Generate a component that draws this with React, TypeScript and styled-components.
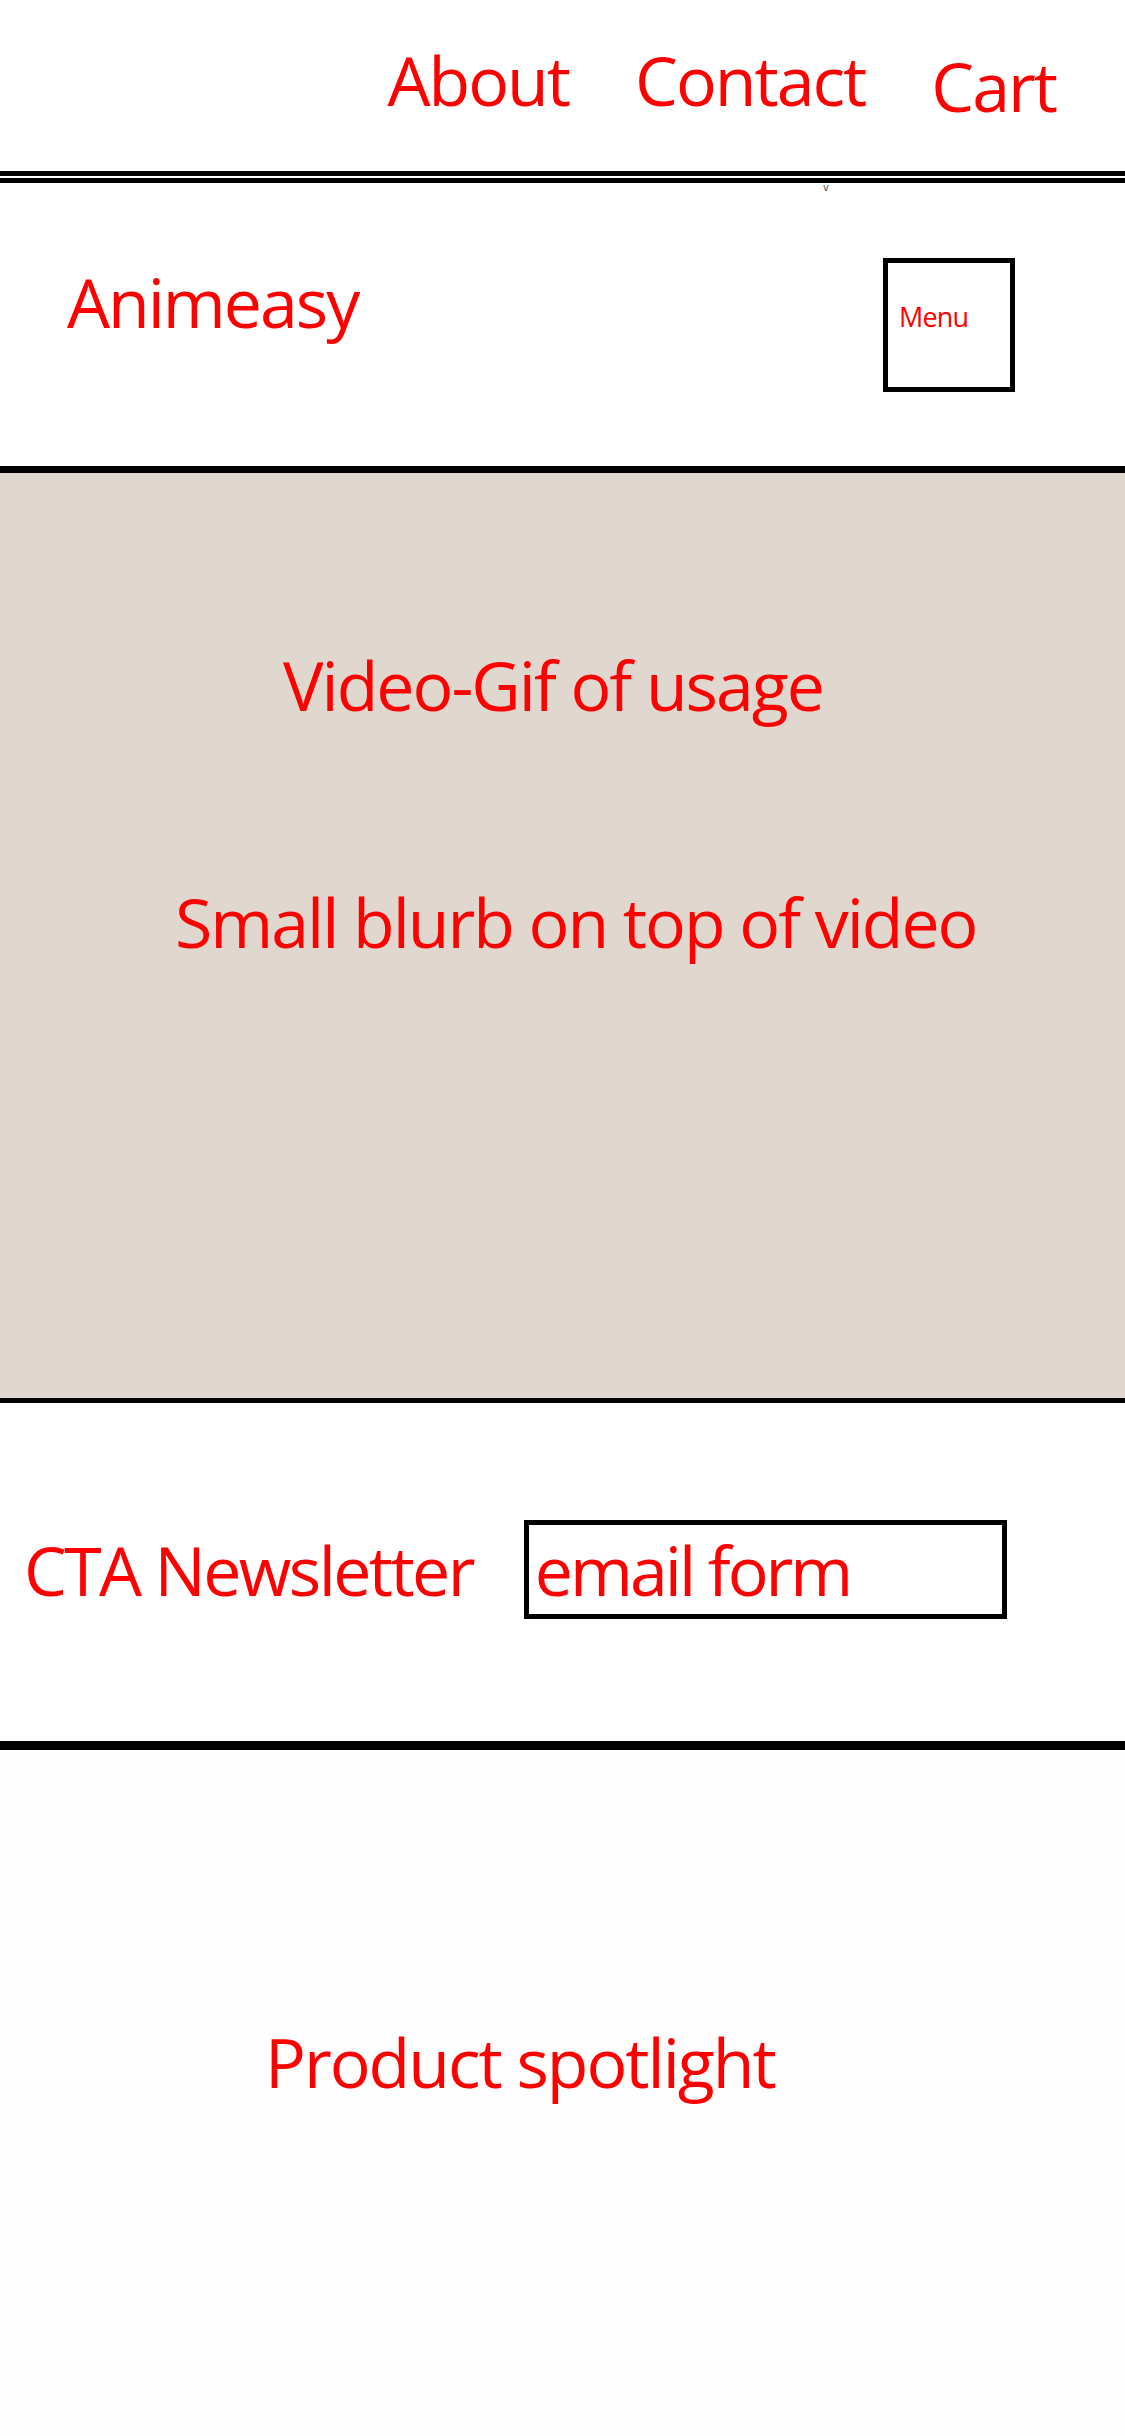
import * as React from "react";
import styled, { createGlobalStyle } from "styled-components";

const RED = "#ff0000";
const INK = "#000000";

const GlobalStyle = createGlobalStyle`
  html, body {
    margin: 0;
    padding: 0;
    background: #ffffff;
  }
  body {
    font-family: "Open Sans", "Liberation Sans", sans-serif;
  }
  * {
    box-sizing: border-box;
  }
`;

const SPage = styled.div`
  width: 1125px;
  min-height: 2436px;
  display: flex;
  flex-direction: column;
  background: #fefefe;
`;

const SLabel = styled.span<{ size?: number; track?: number }>`
  display: block;
  font-size: ${p => p.size || 68}px;
  line-height: 1;
  color: ${RED};
  letter-spacing: ${p =>
    p.track !== undefined ? p.track : ((p.size || 68) * -0.03).toFixed(1)}px;
  white-space: nowrap;
`;

/* top strip with the links */
const STopNav = styled.nav`
  height: 171px;
  display: flex;
  justify-content: flex-end;
  align-items: flex-start;
  gap: 66px;
  padding: 46px 69px 0 0;
  background: #ffffff;
`;

const SNavLink = styled(SLabel)<{ drop?: number }>`
  margin-top: ${p => p.drop || 0}px;
`;

const SDoubleRule = styled.div`
  height: 12px;
  border-top: 5px solid ${INK};
  border-bottom: 5px solid ${INK};
  background: #ffffff;
`;

const SCaretRow = styled.div`
  height: 12px;
  padding-left: 823px;
  font-family: "DejaVu Sans", sans-serif;
  font-size: 10px;
  line-height: 10px;
  color: #555555;
  background: #ffffff;
`;

const SBrandBar = styled.header`
  height: 278px;
  display: flex;
  justify-content: space-between;
  align-items: flex-start;
  padding: 63px 110px 0 67px;
  border-bottom: 7px solid ${INK};
  background: #ffffff;
`;

const SLogo = styled(SLabel)`
  margin-top: 10px;
`;

const SMenuBox = styled.button`
  width: 132px;
  height: 134px;
  padding: 40px 0 0 11px;
  display: flex;
  align-items: flex-start;
  border: 5px solid ${INK};
  border-radius: 0;
  background: #ffffff;
  font-family: inherit;
  cursor: pointer;
`;

/* tan block standing in for the video */
const SHero = styled.section`
  height: 930px;
  display: flex;
  flex-direction: column;
  padding-top: 178px;
  gap: 169px;
  background: #e0d8cf;
  border-bottom: 5px solid ${INK};
`;

const SHeroLine = styled(SLabel)<{ indent: number }>`
  padding-left: ${p => p.indent}px;
`;

const SNewsletter = styled.section`
  height: 347px;
  display: flex;
  align-items: flex-start;
  gap: 51px;
  padding: 117px 0 0 24px;
  background: #ffffff;
  border-bottom: 9px solid ${INK};
`;

const SNewsletterRow = styled.div`
  height: 99px;
  display: flex;
  align-items: center;
`;

const SEmailBox = styled.div`
  width: 483px;
  height: 99px;
  display: flex;
  align-items: center;
  padding-left: 6px;
  border: 5px solid ${INK};
  background: #ffffff;
`;

const SSpotlight = styled.section`
  flex: 1;
  padding: 278px 0 0 265px;
  background: #fefefe;
`;

const App = () => (
  <SPage>
    <GlobalStyle />
    <STopNav>
      <SNavLink>{"About"}</SNavLink>
      <SNavLink>{"Contact"}</SNavLink>
      <SNavLink drop={6}>{"Cart"}</SNavLink>
    </STopNav>
    <SDoubleRule />
    <SCaretRow>{"v"}</SCaretRow>
    <SBrandBar>
      <SLogo>{"Animeasy"}</SLogo>
      <SMenuBox type="button">
        <SLabel size={27}>{"Menu"}</SLabel>
      </SMenuBox>
    </SBrandBar>
    <SHero>
      <SHeroLine indent={283}>{"Video-Gif of usage"}</SHeroLine>
      <SHeroLine indent={175}>{"Small blurb on top of video"}</SHeroLine>
    </SHero>
    <SNewsletter>
      <SNewsletterRow>
        <SLabel track={-2.6}>{"CTA Newsletter"}</SLabel>
      </SNewsletterRow>
      <SEmailBox>
        <SLabel track={-3}>{"email form"}</SLabel>
      </SEmailBox>
    </SNewsletter>
    <SSpotlight>
      <SLabel>{"Product spotlight"}</SLabel>
    </SSpotlight>
  </SPage>
);

export default App;
